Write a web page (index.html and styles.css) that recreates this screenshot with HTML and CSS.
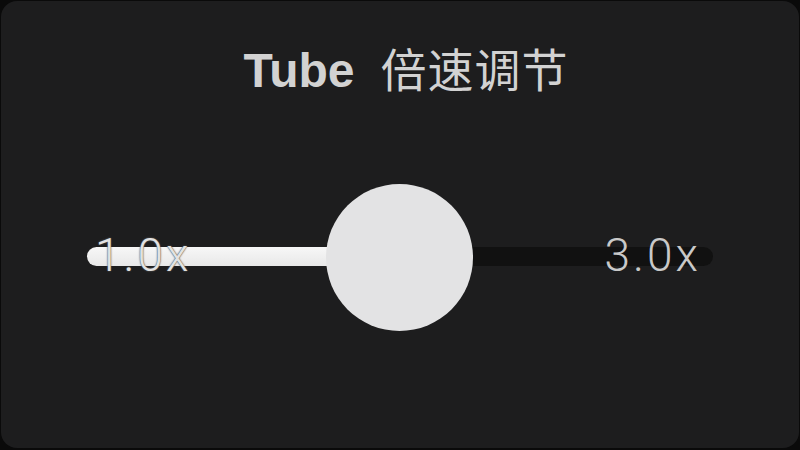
FILE: index.html
```html
<!DOCTYPE html>
<html lang="zh">
<head>
<meta charset="utf-8">
<link rel="stylesheet" href="styles.css">
</head>
<body>
<div class="card">
  <h1 class="title"><span class="brand">Tube</span><span class="zh">倍速调节</span></h1>
  <div class="slider">
    <div class="fill"></div>
    <div class="rest"></div>
    <span class="label label-min">1.0x</span>
    <span class="label label-max">3.0x</span>
    <div class="thumb"></div>
  </div>
</div>
</body>
</html>
```
FILE: styles.css
```css
html, body {
  margin: 0;
  padding: 0;
  width: 800px;
  height: 450px;
  overflow: hidden;
  background: #0a0a0a;
}
.card {
  box-sizing: border-box;
  width: 798px;
  height: 447px;
  margin: 1px 0 0 1px;
  background: #1d1d1e;
  border-radius: 16px;
  display: flex;
  flex-direction: column;
  align-items: center;
}
.title {
  margin: 42px 0 0 12px;
  font-size: 48px;
  line-height: 48px;
  color: #d2d2d2;
  display: flex;
  align-items: baseline;
  gap: 26px;
}
.brand {
  font-family: "Liberation Sans", Arial, sans-serif;
  font-weight: 700;
}
.zh {
  font-family: "Noto Sans CJK SC", sans-serif;
  font-weight: 400;
  font-size: 46px;
  letter-spacing: 1px;
}
.slider {
  position: relative;
  width: 626px;
  height: 19px;
  margin-top: 152px;
  display: flex;
}
.fill {
  width: 312px;
  height: 100%;
  background: linear-gradient(to bottom, #f7f7f7, #e8e8e8);
  border-radius: 10px 0 0 10px;
}
.rest {
  flex: 1;
  height: 100%;
  background: #111111;
  border-radius: 0 10px 10px 0;
}
.label {
  position: absolute;
  top: -15px;
  font-family: Roboto, "Liberation Sans", sans-serif;
  font-weight: 300;
  font-size: 46px;
  line-height: 46px;
  letter-spacing: 3px;
}
.label-min {
  left: 8px;
  color: #e2e2e2;
  text-shadow: 0 0 1px #444, 0 0 2px #666;
}
.label-max {
  right: 12px;
  color: #c9c9c9;
}
.thumb {
  position: absolute;
  left: 239px;
  top: -63px;
  width: 147px;
  height: 147px;
  border-radius: 50%;
  background: #e3e3e4;
}
```
